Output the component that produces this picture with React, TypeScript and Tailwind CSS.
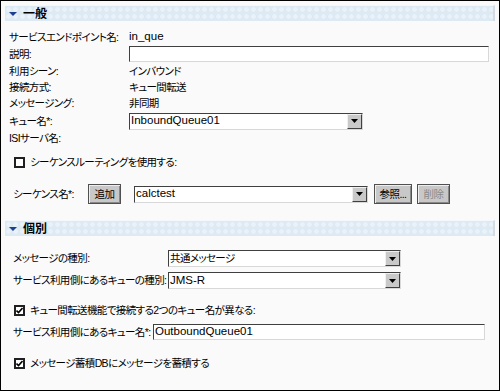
import React from "react";

const font = "font-['Liberation_Sans','Noto_Sans_CJK_JP',sans-serif] [font-feature-settings:'palt']";
const txt = "text-[10.5px] leading-none tracking-[-0.6px] whitespace-nowrap";

function Header({ title }: { title: string }) {
  return (
    <div className="mx-[4px] h-[16px] flex items-center border-t border-[#f4f8fb] border-r-2 border-r-[#d5dbe0] bg-[#dde9f3] bg-[radial-gradient(circle,#eaf2f9_2px,transparent_2.5px)] bg-[length:7px_7px]">
      <svg width="9" height="6" viewBox="0 0 9 6" className="ml-[4px] mr-[5px]">
        <polygon points="0,1 8,1 4,5" fill="#1c3f8f" />
      </svg>
      <span className="text-[12px] font-bold leading-none text-black">{title}</span>
    </div>
  );
}

function TextInput({ value, className }: { value?: string; className: string }) {
  return (
    <div className={`bg-white border-t border-l border-[#404040] border-b border-r border-b-[#d8d8d8] border-r-[#d8d8d8] flex items-center pl-[1px] text-[11.5px] leading-none whitespace-nowrap ${className}`}>
      {value}
    </div>
  );
}

function Select({ value, className }: { value?: string; className: string }) {
  return (
    <div className={`bg-white border-t border-l border-[#404040] border-b border-r border-b-[#d8d8d8] border-r-[#d8d8d8] flex items-center ${className}`}>
      <span className={`flex-1 pl-[1px] ${value && /[A-Za-z]/.test(value) ? "text-[11.5px] leading-none" : txt}`}>{value}</span>
      <div className="w-[15px] h-full bg-[#c9c9c9] border-t border-l border-[#f0f0f0] border-b border-r border-b-[#404040] border-r-[#404040] flex items-center justify-center">
        <svg width="7" height="4" viewBox="0 0 7 4">
          <polygon points="0,0 7,0 3.5,4" fill="#000" />
        </svg>
      </div>
    </div>
  );
}

function Btn({ label, className, disabled }: { label: string; className: string; disabled?: boolean }) {
  return (
    <div className={`h-[20px] bg-[#c8c8c8] border border-[#505050] flex items-center justify-center ${txt} shadow-[inset_1px_1px_0_#eeeeee,inset_-1px_-1px_0_#888888] ${disabled ? "text-[#8a8a8a]" : "text-black"} ${className}`}>
      {label}
    </div>
  );
}

function Check({ checked }: { checked?: boolean }) {
  return (
    <div className="w-[11px] h-[11px] border-2 border-[#202020] bg-white flex items-center justify-center shrink-0">
      {checked && (
        <svg width="7" height="7" viewBox="0 0 7 7">
          <polyline points="0.5,3.5 2.5,5.5 6.5,1" fill="none" stroke="#000" strokeWidth="1.6" />
        </svg>
      )}
    </div>
  );
}

function Row({ label, children, h = 16 }: { label: string; children?: React.ReactNode; h?: number }) {
  return (
    <div className="flex items-center" style={{ height: h }}>
      <div className={`w-[128px] pl-[8px] shrink-0 ${txt}`}>{label}</div>
      {children}
    </div>
  );
}

export default function App() {
  return (
    <div className={`w-[500px] h-[391px] border border-black bg-[#fafafa] text-black ${font} pt-[4px] flex flex-col`}>
      <Header title="一般" />
      <div className="mt-[8px]">
        <Row label="サービスエンドポイント名:">
          <span className="text-[11.5px] leading-none">in_que</span>
        </Row>
      </div>
      <div className="mt-[1px]">
        <Row label="説明:">
          <TextInput className="w-[360px] h-[16px]" />
        </Row>
      </div>
      <div className="mt-[1px]">
        <Row label="利用シーン:"><span className={txt}>インバウンド</span></Row>
        <Row label="接続方式:"><span className={txt}>キュー間転送</span></Row>
        <Row label="メッセージング:"><span className={txt}>非同期</span></Row>
      </div>
      <div className="mt-[2px]">
        <Row label="キュー名*:">
          <Select value="InboundQueue01" className="w-[234px] h-[17px]" />
        </Row>
      </div>
      <div className="mt-[1px]">
        <Row label="ISIサーバ名:" />
      </div>
      <div className="mt-[8px] h-[16px] flex items-center pl-[13px]">
        <Check />
        <span className={`ml-[5px] ${txt}`}>シーケンスルーティングを使用する:</span>
      </div>
      <div className="mt-[14px] h-[20px] flex items-center">
        <span className={`pl-[12px] w-[87px] shrink-0 ${txt}`}>シーケンス名*:</span>
        <Btn label="追加" className="w-[33px]" />
        <Select value="calctest" className="ml-[13px] w-[234px] h-[17px]" />
        <Btn label="参照..." className="ml-[6px] w-[38px]" />
        <Btn label="削除" className="ml-[5px] w-[33px]" disabled />
      </div>
      <div className="mt-[16px]">
        <Header title="個別" />
      </div>
      <div className="mt-[14px] h-[17px] flex items-center">
        <span className={`pl-[12px] w-[167px] shrink-0 ${txt}`}>メッセージの種別:</span>
        <Select value="共通メッセージ" className="w-[233px] h-[17px]" />
      </div>
      <div className="mt-[5px] h-[17px] flex items-center">
        <span className={`pl-[12px] w-[167px] shrink-0 ${txt}`}>サービス利用側にあるキューの種別:</span>
        <Select value="JMS-R" className="w-[233px] h-[17px]" />
      </div>
      <div className="mt-[13px] h-[16px] flex items-center pl-[13px]">
        <Check checked />
        <span className={`ml-[5px] ${txt}`}>キュー間転送機能で接続する2つのキュー名が異なる:</span>
      </div>
      <div className="mt-[6px] h-[16px] flex items-center">
        <span className={`pl-[12px] w-[152px] shrink-0 ${txt}`}>サービス利用側にあるキュー名*:</span>
        <TextInput value="OutboundQueue01" className="w-[332px] h-[16px]" />
      </div>
      <div className="mt-[15px] h-[16px] flex items-center pl-[13px]">
        <Check checked />
        <span className={`ml-[5px] ${txt}`}>メッセージ蓄積DBにメッセージを蓄積する</span>
      </div>
    </div>
  );
}
